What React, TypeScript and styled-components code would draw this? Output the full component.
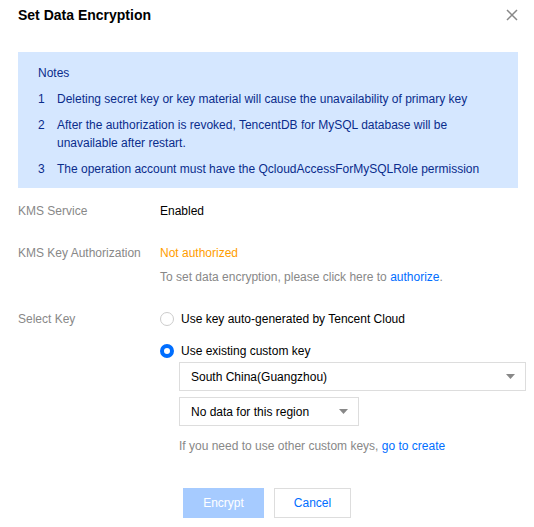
import styled, { createGlobalStyle } from 'styled-components';

const GlobalStyle = createGlobalStyle`
  html, body {
    margin: 0;
    padding: 0;
    background: #fff;
  }
  body {
    font-family: "Liberation Sans", Arial, sans-serif;
    font-size: 12px;
    color: #000;
  }
`;

const notes = [
  'Deleting secret key or key material will cause the unavailability of primary key',
  'After the authorization is revoked, TencentDB for MySQL database will be unavailable after restart.',
  'The operation account must have the QcloudAccessForMySQLRole permission',
];

const CloseIcon = () => (
  <svg width="12" height="12" viewBox="0 0 12 12">
    <path d="M1 1 L11 11 M11 1 L1 11" stroke="#888" strokeWidth="1.5" fill="none" />
  </svg>
);

const Arrow = () => (
  <svg width="9" height="5" viewBox="0 0 9 5">
    <path d="M0 0 H9 L4.5 5 Z" fill="#888" />
  </svg>
);

export default function App() {
  return (
    <>
      <GlobalStyle />
      <Dialog>
        <Header>
          <Title>Set Data Encryption</Title>
          <CloseButton>
            <CloseIcon />
          </CloseButton>
        </Header>

        <Notes>
          <NotesTitle>Notes</NotesTitle>
          {notes.map((text, i) => (
            <NoteItem key={i}>
              <NoteNum>{i + 1}</NoteNum>
              <NoteText>{text}</NoteText>
            </NoteItem>
          ))}
        </Notes>

        <Form>
          <Row>
            <Label>KMS Service</Label>
            <Field>
              <Value>Enabled</Value>
            </Field>
          </Row>
          <Row>
            <Label>KMS Key Authorization</Label>
            <Field>
              <Value $tone="warning">Not authorized</Value>
              <Hint>
                To set data encryption, please click here to <Link>authorize</Link>.
              </Hint>
            </Field>
          </Row>
          <Row $gap={24}>
            <Label>Select Key</Label>
            <Field>
              <RadioOption>
                <Radio $checked={false} />
                Use key auto-generated by Tencent Cloud
              </RadioOption>
              <RadioOption>
                <Radio $checked />
                Use existing custom key
              </RadioOption>
              <Selects>
                <Select $width={347}>
                  <span>South China(Guangzhou)</span>
                  <Arrow />
                </Select>
                <Select $width={180}>
                  <span>No data for this region</span>
                  <Arrow />
                </Select>
                <Hint>
                  If you need to use other custom keys, <Link>go to create</Link>
                </Hint>
              </Selects>
            </Field>
          </Row>
        </Form>

        <Footer>
          <Button $primary disabled>
            Encrypt
          </Button>
          <Button>Cancel</Button>
        </Footer>
      </Dialog>
    </>
  );
}

const Dialog = styled.div`
  width: 534px;
  padding: 0 8px 0 18px;
  box-sizing: border-box;
`;

const Header = styled.div`
  display: flex;
  align-items: center;
  justify-content: space-between;
  height: 30px;
  padding-right: 8px;
`;

const Title = styled.h3`
  margin: 0;
  font-size: 14px;
  font-weight: bold;
  color: #000;
`;

const CloseButton = styled.span`
  display: flex;
  width: 12px;
  height: 12px;
`;

const Notes = styled.div`
  margin-top: 22px;
  width: 500px;
  box-sizing: border-box;
  background: #d5e7ff;
  color: #0a2c8c;
  padding: 12px 38px 10px 20px;
  line-height: 18px;
`;

const NotesTitle = styled.div`
  margin-bottom: 8px;
`;

const NoteItem = styled.div`
  display: flex;
  & + & {
    margin-top: 8px;
  }
`;

const NoteNum = styled.span`
  width: 19px;
  flex-shrink: 0;
`;

const NoteText = styled.span``;

const Form = styled.div`
  margin-top: 14px;
  display: flex;
  flex-direction: column;
`;

const Row = styled.div<{ $gap?: number }>`
  display: grid;
  grid-template-columns: 142px 1fr;
  line-height: 18px;
  & + & {
    margin-top: ${({ $gap }) => $gap ?? 23}px;
  }
`;

const Label = styled.div`
  color: #888;
`;

const Field = styled.div`
  display: flex;
  flex-direction: column;
`;

const Value = styled.div<{ $tone?: 'warning' }>`
  color: ${({ $tone }) => ($tone === 'warning' ? '#ff9d00' : '#000')};
`;

const Hint = styled.div`
  color: #888;
  margin-top: 6px;
`;

const Link = styled.a`
  color: #006eff;
  cursor: pointer;
`;

const RadioOption = styled.label`
  display: flex;
  align-items: center;
  gap: 7px;
  color: #000;
  & + & {
    margin-top: 14px;
  }
`;

const Radio = styled.span<{ $checked: boolean }>`
  width: 14px;
  height: 14px;
  box-sizing: border-box;
  border-radius: 50%;
  background: #fff;
  border: ${({ $checked }) => ($checked ? '4px solid #006eff' : '1px solid #cccccc')};
`;

const Selects = styled.div`
  margin-top: 2px;
  padding-left: 19px;
  display: flex;
  flex-direction: column;
  gap: 6px;

  ${Hint} {
    margin-top: 5px;
  }
`;

const Select = styled.div<{ $width: number }>`
  width: ${({ $width }) => $width}px;
  height: 29px;
  box-sizing: border-box;
  border: 1px solid #ddd;
  background: #fff;
  display: flex;
  align-items: center;
  justify-content: space-between;
  padding: 0 10px 0 11px;
  color: #000;
`;

const Footer = styled.div`
  display: flex;
  justify-content: center;
  gap: 10px;
  margin-top: 33px;
  margin-left: -18px;
  margin-right: -8px;
`;

const Button = styled.button<{ $primary?: boolean }>`
  height: 30px;
  padding: 0;
  font-family: inherit;
  font-size: 12px;
  box-sizing: border-box;
  border: 1px solid ${({ $primary }) => ($primary ? '#a6cbff' : '#ddd')};
  background: ${({ $primary }) => ($primary ? '#a6cbff' : '#fff')};
  color: ${({ $primary }) => ($primary ? '#fff' : '#006eff')};
  width: ${({ $primary }) => ($primary ? '81px' : '77px')};
`;
